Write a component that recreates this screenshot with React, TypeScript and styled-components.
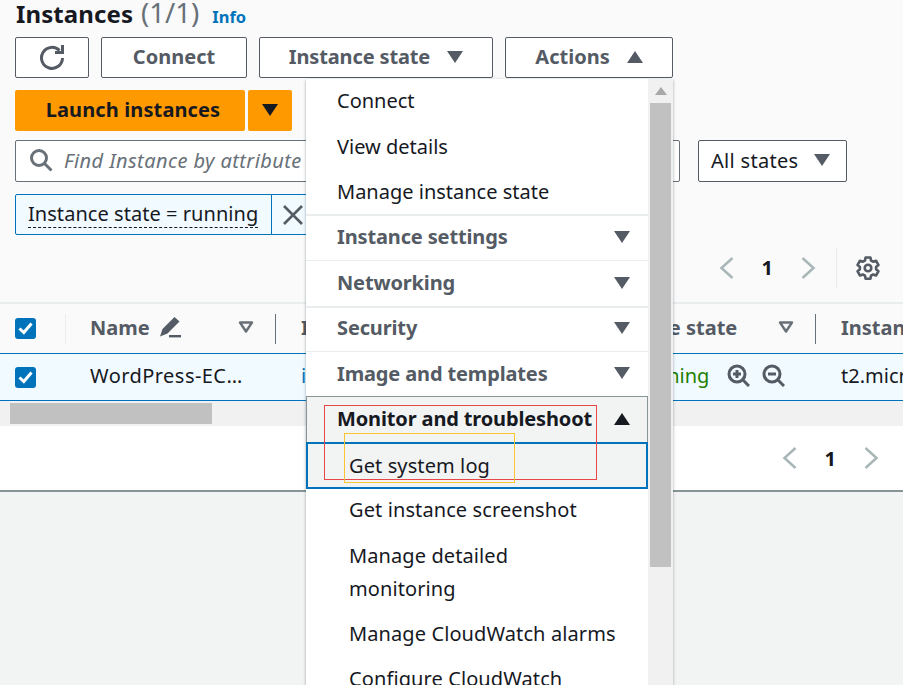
import styled, { createGlobalStyle } from 'styled-components'

const GlobalStyle = createGlobalStyle`
  html, body {
    margin: 0;
    height: 685px;
    overflow: hidden;
    background: #f2f3f3;
    font-family: 'Noto Sans', 'Open Sans', sans-serif;
    color: #16191f;
  }
  * { box-sizing: border-box; }
`

const Page = styled.div`
  position: relative;
  width: 903px;
  height: 685px;
  overflow: hidden;
  background: #f2f3f3;
`
const TopArea = styled.div`
  display: flex;
  flex-direction: column;
  height: 304px;
  padding: 0 15px;
  background: #fafafa;
  border-bottom: 2px solid #eaeded;
`
const TitleRow = styled.div`
  display: flex;
  align-items: baseline;
  height: 31px;
  line-height: 25px;
`
const Title = styled.h1`
  margin: 0 0 0 1px;
  font-size: 24px;
  line-height: 25px;
  font-weight: 700;
  letter-spacing: 0.1px;
  color: #16191f;
`
const Count = styled.span`
  margin-left: 8px;
  font-size: 27.5px;
  line-height: 25px;
  color: #687078;
`
const InfoLink = styled.a`
  margin-left: 13px;
  font-size: 16.5px;
  font-weight: 700;
  color: #0073bb;
`
const Toolbar = styled.div`
  display: flex;
  gap: 12px;
  margin-top: 6px;
`
const Button = styled.div<{ $width: number; $tight?: boolean }>`
  display: flex;
  align-items: center;
  justify-content: center;
  gap: 17px;
  width: ${(p) => p.$width}px;
  height: 41px;
  padding-bottom: 2px;
  background: #fff;
  border: 1px solid #545b64;
  border-radius: 2px;
  font-size: 20px;
  font-weight: 700;
  letter-spacing: ${(p) => (p.$tight ? '-0.14px' : 'normal')};
  color: #545b64;
`
const LaunchRow = styled.div`
  display: flex;
  gap: 3px;
  margin-top: 12px;
`
const LaunchButton = styled.div<{ $width: number; $shift?: number }>`
  display: flex;
  align-items: center;
  justify-content: center;
  width: ${(p) => p.$width}px;
  height: 41px;
  padding: 0 0 2px ${(p) => p.$shift ?? 0}px;
  background: #ff9900;
  border-radius: 2px;
  font-size: 20px;
  font-weight: 700;
  letter-spacing: 0.12px;
  color: #16191f;
`
const FilterRow = styled.div`
  display: flex;
  gap: 18px;
  margin-top: 9px;
`
const SearchBox = styled.div`
  display: flex;
  align-items: center;
  gap: 11px;
  width: 665px;
  height: 42px;
  padding: 0 0 2px 13px;
  background: #fff;
  border: 1px solid #687078;
  border-radius: 2px;
  font-size: 20px;
  font-style: italic;
  letter-spacing: 0.42px;
  color: #687078;
  white-space: nowrap;
`
const StateSelect = styled.div`
  display: flex;
  align-items: center;
  gap: 16px;
  width: 149px;
  height: 42px;
  padding: 0 0 2px 12px;
  background: #fff;
  border: 1px solid #545b64;
  border-radius: 2px;
  font-size: 20px;
  letter-spacing: 0.3px;
  color: #16191f;
`
const TokenRow = styled.div`
  display: flex;
  height: 41px;
  width: 330px;
  margin-top: 12px;
  background: #f1faff;
  border: 1px solid #0073bb;
  border-radius: 2px;
`
const TokenLabel = styled.div`
  display: flex;
  align-items: center;
  width: 256px;
  padding-left: 12px;
  border-right: 1px solid #0073bb;
  font-size: 20px;
  letter-spacing: 0.05px;
  color: #16191f;
`
const Dashed = styled.span`
  line-height: 26px;
  border-bottom: 1px dashed #16191f;
`
const TokenClose = styled.div`
  display: flex;
  align-items: center;
  padding-left: 10px;
`
const PagerRow = styled.div`
  display: flex;
  align-items: center;
  justify-content: flex-end;
  height: 41px;
  margin-top: 12px;
`
const Pager = styled.div`
  display: flex;
  align-items: center;
  gap: 27px;
  font-size: 20px;
  font-weight: 700;
`
const PagerDivider = styled.div`
  width: 1px;
  height: 40px;
  margin: 0 19px 0 20px;
  background: #eaeded;
`
const SettingsSlot = styled.div`
  display: flex;
  width: 32px;
`
const Row = styled.div<{ $selected?: boolean }>`
  display: grid;
  grid-template-columns: 66px 210px 294px 246px 87px;
  align-items: center;
  height: ${(p) => (p.$selected ? 48 : 49)}px;
  background: ${(p) => (p.$selected ? '#f1faff' : '#fafafa')};
  border-bottom: ${(p) => (p.$selected ? '1px solid #0073bb' : 'none')};
  border-top: ${(p) => (p.$selected ? '1px solid #0073bb' : 'none')};
  font-size: 20px;
  white-space: nowrap;
`
const HeadCell = styled.div<{ $divider?: boolean; $pad: number }>`
  display: flex;
  align-items: center;
  justify-content: space-between;
  height: 30px;
  padding: 0 21px 3px ${(p) => p.$pad}px;
  border-right: ${(p) => (p.$divider ? '1px solid #687078' : 'none')};
  font-weight: 700;
  color: #545b64;
  overflow: hidden;
`
const CheckCell = styled.div<{ $divider?: boolean }>`
  display: flex;
  align-items: center;
  height: 30px;
  padding-left: 15px;
  border-right: ${(p) => (p.$divider ? '1px solid #eaeded' : 'none')};
`
const CheckBox = styled.div`
  display: flex;
  align-items: center;
  justify-content: center;
  width: 21px;
  height: 21px;
  background: #0073bb;
  border-radius: 3px;
`
const NameWithIcon = styled.span`
  display: flex;
  align-items: center;
  gap: 9px;
`
const BodyCell = styled.div<{ $pad: number; $link?: boolean; $spaced?: boolean }>`
  display: flex;
  align-items: center;
  gap: 12px;
  padding: 0 0 3px ${(p) => p.$pad}px;
  letter-spacing: ${(p) => (p.$spaced ? '0.45px' : 'normal')};
  color: ${(p) => (p.$link ? '#0073bb' : '#16191f')};
  overflow: hidden;
`
const Running = styled.span`
  margin-right: 6px;
  color: #1d8102;
`
const ScrollTrack = styled.div`
  height: 25px;
  padding: 2px 10px;
  background: #f1f1f1;
`
const ScrollThumb = styled.div`
  width: 202px;
  height: 21px;
  background: #c1c1c1;
`
const Footer = styled.div`
  display: flex;
  align-items: center;
  justify-content: flex-end;
  gap: 27px;
  height: 66px;
  padding-right: 24px;
  background: #fff;
  border-bottom: 2px solid #879596;
  font-size: 20px;
  font-weight: 700;
`
const MenuShell = styled.div`
  position: absolute;
  left: 306px;
  top: 79px;
  display: flex;
  width: 367px;
  height: 640px;
  background: #fff;
  box-shadow: 0 1px 3px rgba(0, 28, 36, 0.35);
`
const MenuList = styled.div`
  width: 342px;
  margin-top: -1px;
`
const MenuItem = styled.div<{ $height: number }>`
  display: flex;
  align-items: center;
  height: ${(p) => p.$height}px;
  padding-left: 31px;
  font-size: 20px;
  color: #16191f;
`
const SectionItem = styled.div<{ $heavy?: boolean; $height?: number; $bottom?: number }>`
  display: flex;
  align-items: center;
  justify-content: space-between;
  height: ${(p) => p.$height ?? 46}px;
  padding: 0 18px ${(p) => p.$bottom ?? 2}px 31px;
  border-top: ${(p) => (p.$heavy ? 2 : 1)}px solid #eaeded;
  font-size: 20px;
  font-weight: 700;
  letter-spacing: -0.14px;
  color: #545b64;
`
const OpenSection = styled(SectionItem)`
  background: #f2f3f3;
  border: 1px solid #879596;
  border-bottom: none;
  padding: 0 17px 2px 30px;
  color: #16191f;
`
const HighlightItem = styled.div`
  display: flex;
  align-items: center;
  height: 47px;
  padding-left: 41px;
  background: #f2f3f3;
  border: 2px solid #0073bb;
  font-size: 20px;
  letter-spacing: 0.1px;
  color: #16191f;
`
const SubMenu = styled.div`
  display: flex;
  flex-direction: column;
  gap: 12px;
  padding: 4px 0 0 43px;
  font-size: 20px;
  line-height: 33px;
  letter-spacing: 0.1px;
  color: #16191f;
`
const SubItem = styled.div<{ $after?: number }>`
  margin-bottom: ${(p) => p.$after ?? 0}px;
  white-space: nowrap;
`
const MenuScroll = styled.div`
  width: 25px;
  padding: 0 2px;
  background: #f1f1f1;
`
const MenuScrollArrow = styled.div`
  display: flex;
  justify-content: center;
  align-items: center;
  height: 24px;
`
const MenuScrollThumb = styled.div`
  height: 464px;
  background: #c1c1c1;
`
const Annotation = styled.div<{ $x: number; $y: number; $w: number; $h: number; $color: string }>`
  position: absolute;
  left: ${(p) => p.$x}px;
  top: ${(p) => p.$y}px;
  width: ${(p) => p.$w}px;
  height: ${(p) => p.$h}px;
  border: 1.5px solid ${(p) => p.$color};
  pointer-events: none;
`

const Caret = ({ up, color = '#545b64' }: { up?: boolean; color?: string }) => (
  <svg width="16" height="14" viewBox="0 0 16 14">
    <path d={up ? 'M8 1L16 13H0Z' : 'M0 1H16L8 13Z'} fill={color} />
  </svg>
)
const FilterCaret = () => (
  <svg width="16" height="14" viewBox="0 0 16 14" fill="none">
    <path d="M2 2.5H14L8 11.5Z" stroke="#687078" strokeWidth="2.4" strokeLinejoin="round" />
  </svg>
)
const Chevron = ({ right }: { right?: boolean }) => (
  <svg width="16" height="24" viewBox="0 0 16 24" fill="none">
    <path d={right ? 'M2.5 2L13.5 12L2.5 22' : 'M13.5 2L2.5 12L13.5 22'} stroke="#aab7b8" strokeWidth="2.6" />
  </svg>
)
const Refresh = () => (
  <svg width="26" height="26" viewBox="0 0 26 26" fill="none" stroke="#545b64" strokeWidth="3">
    <path d="M20.5 6.5A10.5 10.5 0 1 0 23.5 14" />
    <path d="M23.5 1V8.5H16" />
  </svg>
)
const Search = () => (
  <svg width="24" height="24" viewBox="0 0 24 24" fill="none" stroke="#687078" strokeWidth="3">
    <circle cx="10" cy="10" r="7.5" />
    <path d="M15.5 15.5L22.5 22.5" />
  </svg>
)
const CloseX = () => (
  <svg width="22" height="22" viewBox="0 0 22 22" fill="none" stroke="#545b64" strokeWidth="2.6">
    <path d="M2 2L20 20M20 2L2 20" />
  </svg>
)
const Gear = () => (
  <svg width="24" height="24" viewBox="0 0 24 24" fill="none" stroke="#545b64" strokeWidth="2.6" strokeLinejoin="round">
    <path d="M9.6 1.5h4.8l.6 3 2.1 1.2 2.9-1 2.4 4.2-2.3 2v2.4l2.3 2-2.4 4.2-2.9-1-2.1 1.2-.6 3H9.6l-.6-3-2.1-1.2-2.9 1-2.4-4.2 2.3-2v-2.4l-2.3-2 2.4-4.2 2.9 1L9 4.5z" />
    <circle cx="12" cy="12" r="3.3" />
  </svg>
)
const Pencil = () => (
  <svg width="22" height="22" viewBox="0 0 22 22" fill="#545b64">
    <path d="M15.5 1L20.5 5.5L8.5 17.5L1 20.5L3.5 13Z" />
    <rect x="10" y="19" width="12" height="2.4" />
  </svg>
)
const Tick = () => (
  <svg width="15" height="13" viewBox="0 0 15 13" fill="none" stroke="#fff" strokeWidth="3">
    <path d="M1.5 6.5L5.8 10.5L13.5 1.5" />
  </svg>
)
const Zoom = ({ plus }: { plus?: boolean }) => (
  <svg width="23" height="23" viewBox="0 0 23 23" fill="none" stroke="#545b64" strokeWidth="3">
    <circle cx="10" cy="10" r="8" />
    <path d="M16 16L22 22" />
    <path d={plus ? 'M6 10H14M10 6V14' : 'M6 10H14'} />
  </svg>
)
const SmallArrowUp = () => (
  <svg width="12" height="8" viewBox="0 0 12 8">
    <path d="M6 0L12 8H0Z" fill="#a8a8a8" />
  </svg>
)

export default function App() {
  return (
    <Page>
      <GlobalStyle />
      <TopArea>
        <TitleRow>
          <Title>Instances</Title>
          <Count>(1/1)</Count>
          <InfoLink>Info</InfoLink>
        </TitleRow>
        <Toolbar>
          <Button $width={74}><Refresh /></Button>
          <Button $width={146}>Connect</Button>
          <Button $width={234} $tight>Instance state <Caret /></Button>
          <Button $width={168}>Actions <Caret up /></Button>
        </Toolbar>
        <LaunchRow>
          <LaunchButton $width={230} $shift={6}>Launch instances</LaunchButton>
          <LaunchButton $width={44}><Caret color="#16191f" /></LaunchButton>
        </LaunchRow>
        <FilterRow>
          <SearchBox><Search />Find Instance by attribute or tag</SearchBox>
          <StateSelect>All states <Caret /></StateSelect>
        </FilterRow>
        <TokenRow>
          <TokenLabel><Dashed>Instance state = running</Dashed></TokenLabel>
          <TokenClose><CloseX /></TokenClose>
        </TokenRow>
        <PagerRow>
          <Pager><Chevron />1<Chevron right /></Pager>
          <PagerDivider />
          <SettingsSlot><Gear /></SettingsSlot>
        </PagerRow>
      </TopArea>
      <Row>
        <CheckCell $divider><CheckBox><Tick /></CheckBox></CheckCell>
        <HeadCell $divider $pad={24}><NameWithIcon>Name <Pencil /></NameWithIcon><FilterCaret /></HeadCell>
        <HeadCell $pad={25}>Instance ID</HeadCell>
        <HeadCell $divider $pad={24}>Instance state<FilterCaret /></HeadCell>
        <HeadCell $pad={25}>Instance type</HeadCell>
      </Row>
      <Row $selected>
        <CheckCell><CheckBox><Tick /></CheckBox></CheckCell>
        <BodyCell $pad={24} $spaced>WordPress-EC…</BodyCell>
        <BodyCell $pad={25} $link>i-0a1b2c3d</BodyCell>
        <BodyCell $pad={60}><Running>Running</Running><Zoom plus /><Zoom /></BodyCell>
        <BodyCell $pad={25}>t2.micro</BodyCell>
      </Row>
      <ScrollTrack><ScrollThumb /></ScrollTrack>
      <Footer><Chevron />1<Chevron right /></Footer>
      <MenuShell>
        <MenuList>
          <MenuItem $height={45}>Connect</MenuItem>
          <MenuItem $height={46}>View details</MenuItem>
          <MenuItem $height={45}>Manage instance state</MenuItem>
          <SectionItem $heavy $bottom={3}>Instance settings <Caret /></SectionItem>
          <SectionItem>Networking <Caret /></SectionItem>
          <SectionItem $heavy $height={45} $bottom={4}>Security <Caret /></SectionItem>
          <SectionItem $height={45}>Image and templates <Caret /></SectionItem>
          <OpenSection>Monitor and troubleshoot <Caret up color="#16191f" /></OpenSection>
          <HighlightItem>Get system log</HighlightItem>
          <SubMenu>
            <SubItem $after={1}>Get instance screenshot</SubItem>
            <SubItem>Manage detailed<br />monitoring</SubItem>
            <SubItem>Manage CloudWatch alarms</SubItem>
            <SubItem>Configure CloudWatch</SubItem>
          </SubMenu>
        </MenuList>
        <MenuScroll>
          <MenuScrollArrow><SmallArrowUp /></MenuScrollArrow>
          <MenuScrollThumb />
        </MenuScroll>
      </MenuShell>
      <Annotation $x={324} $y={405} $w={273} $h={75} $color="#e8474a" />
      <Annotation $x={344} $y={433} $w={171} $h={50} $color="#fbc531" />
    </Page>
  )
}
